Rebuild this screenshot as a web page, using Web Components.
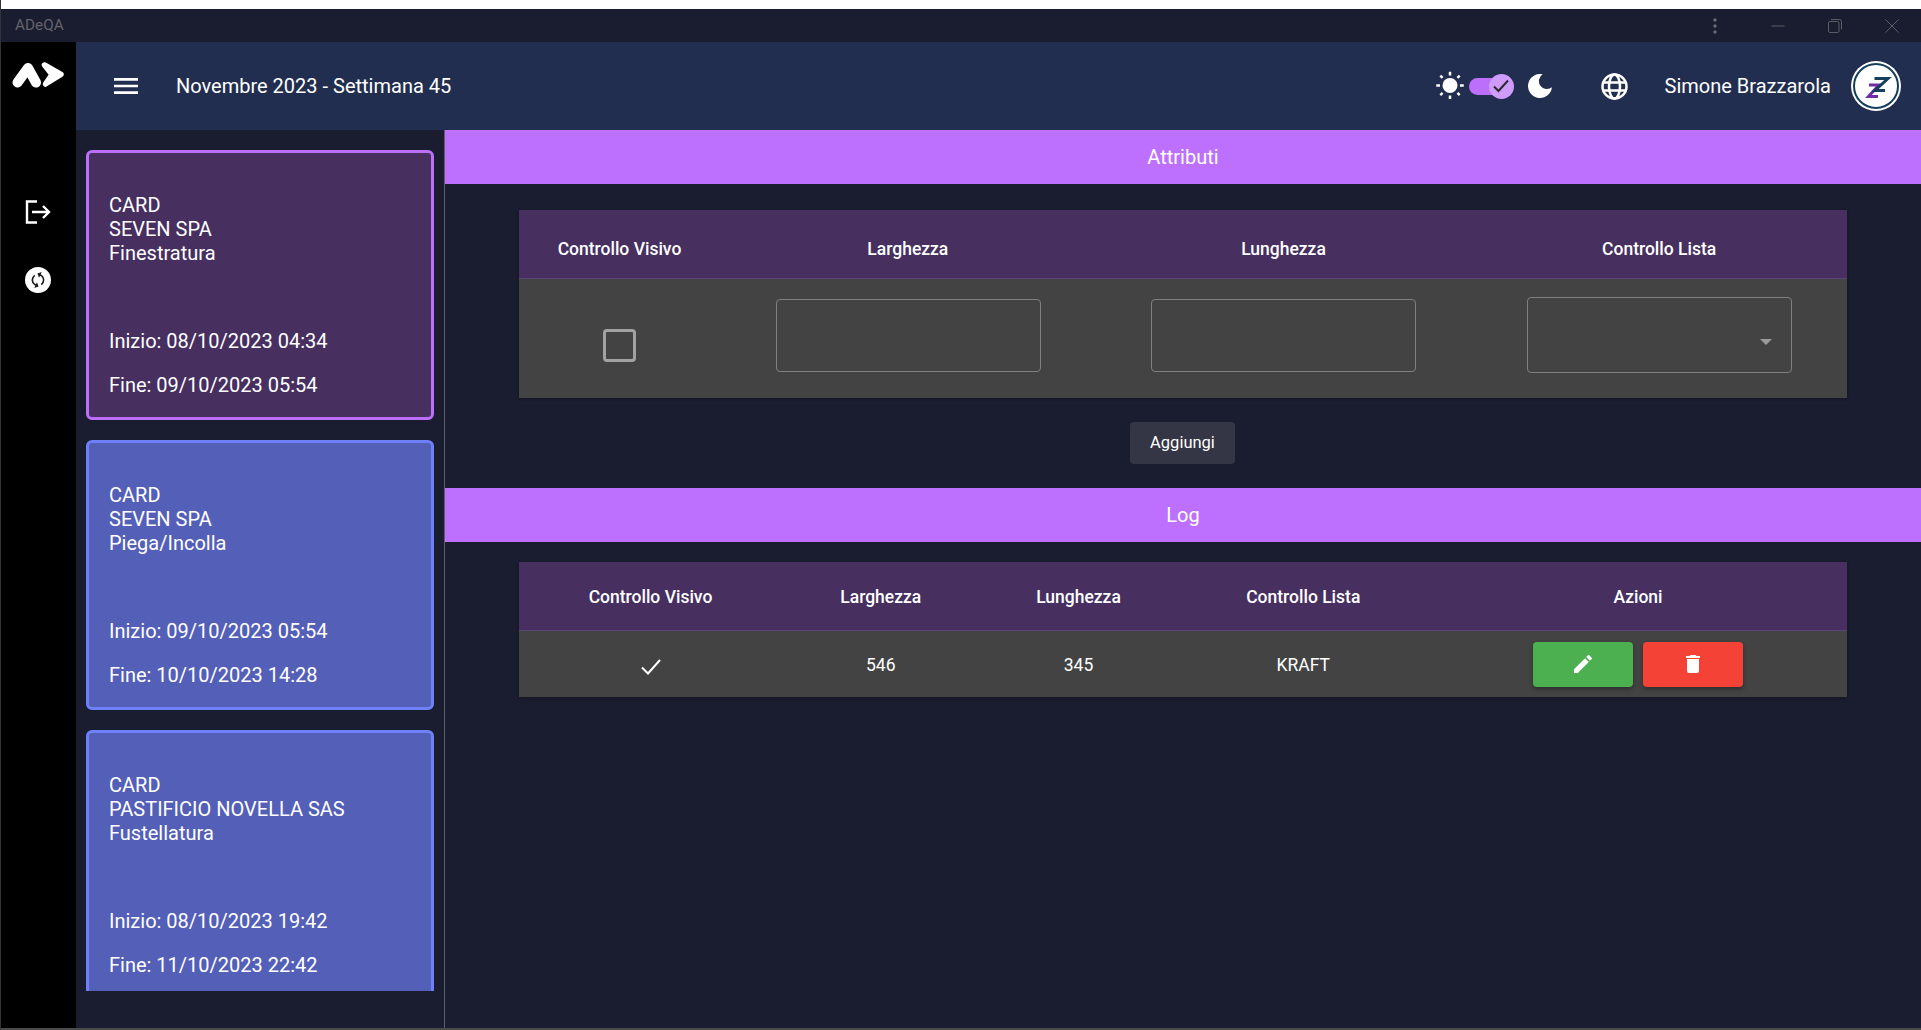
<!DOCTYPE html>
<html lang="it"><head><meta charset="utf-8"><title>ADeQA</title>
<style>
html,body{margin:0;padding:0;background:#fff;height:100%;overflow:hidden}
body{font-family:Roboto,"Liberation Sans",sans-serif;color:#fff}
</style></head><body>
<app-shell>
  <title-bar slot="title"></title-bar>
  <app-rail slot="rail"></app-rail>
  <app-toolbar slot="toolbar"></app-toolbar>
  <job-list slot="side">
    <job-card active client="SEVEN SPA" step="Finestratura" start="08/10/2023 04:34" end="09/10/2023 05:54"></job-card>
    <job-card client="SEVEN SPA" step="Piega/Incolla" start="09/10/2023 05:54" end="10/10/2023 14:28"></job-card>
    <job-card client="PASTIFICIO NOVELLA SAS" step="Fustellatura" start="08/10/2023 19:42" end="11/10/2023 22:42"></job-card>
  </job-list>
  <section-bar>Attributi</section-bar>
  <data-table style="--cols:201px 1fr 1fr 1fr;margin-top:26px">
    <data-row head style="padding-top:9px"><span>Controllo Visivo</span><span>Larghezza</span><span>Lunghezza</span><span>Controllo Lista</span></data-row>
    <data-row tall>
      <check-box style="margin-top:50px"></check-box>
      <text-field style="margin:20px 0 0 1.500px"></text-field>
      <text-field style="margin-top:20px"></text-field>
      <select-field style="margin-top:18px"></select-field>
    </data-row>
  </data-table>
  <add-button>Aggiungi</add-button>
  <section-bar>Log</section-bar>
  <data-table style="--cols:263px 197.500px 198px 251.500px 1fr;margin-top:20px">
    <data-row head style="padding-top:1px"><span>Controllo Visivo</span><span>Larghezza</span><span>Lunghezza</span><span>Controllo Lista</span><span>Azioni</span></data-row>
    <data-row style="padding-top:2px">
      <svg width="20" height="16" viewBox="0 0 20 16" fill="none" stroke="#fff" stroke-width="2" style="margin-top:3px"><polyline points="1,8.500 7,14.500 19,1"/></svg>
      <span>546</span><span>345</span><span>KRAFT</span>
      <row-actions style="margin-top:-2px"></row-actions>
    </data-row>
  </data-table>
</app-shell>
<script>
function def(name, html, cls){
  const t=document.createElement('template');t.innerHTML=html;
  customElements.define(name, class extends HTMLElement{
    constructor(){super();this.attachShadow({mode:'open'}).appendChild(t.content.cloneNode(true));}
    connectedCallback(){ if(cls) cls(this); }
  });
}
def('app-shell',`<style>
:host{display:grid;box-sizing:border-box;width:1921px;height:1030px;padding-top:9px;background:linear-gradient(#fff 9px,#1a1c2f 9px);
grid-template-columns:75px 368px 1fr;grid-template-rows:33px 88px 1fr;border-left:1px solid #30323c;border-bottom:2px solid #4a4a4a}
.s{display:block;min-height:0;overflow:hidden}
main{border-left:1px solid #5d5e6c;display:flex;flex-direction:column;min-width:0}
</style>
<slot name="title" style="display:block;grid-column:1/-1"></slot>
<slot name="rail" style="display:block;grid-row:2/4"></slot>
<slot name="toolbar" style="display:block;grid-column:2/4"></slot>
<slot name="side" class="s"></slot>
<main><slot></slot></main>`);

def('title-bar',`<style>
:host{display:flex;align-items:center;height:33px;background:#1a1c2f;color:#64646e;font:15.300px/33px Roboto,sans-serif;padding-left:14px}
.w{margin-left:auto;display:flex;align-items:center}
svg{display:block}
</style><span>ADeQA</span><div class="w">
<svg width="4" height="16" viewBox="0 0 4 16" fill="#6a6a74" style="margin-right:54px"><circle cx="2" cy="2" r="1.700"/><circle cx="2" cy="8" r="1.700"/><circle cx="2" cy="14" r="1.700"/></svg>
<svg width="14" height="14" viewBox="0 0 14 14" fill="none" stroke="#5c5c66" style="margin-right:43px"><path d="M0.500 7h13"/></svg>
<svg width="14" height="14" viewBox="0 0 14 14" fill="none" stroke="#5c5c66" style="margin-right:43px"><rect x=".5" y="2.500" width="10.500" height="11" rx="1.500"/><path d="M3 .5h8.500a2 2 0 0 1 2 2v8"/></svg>
<svg width="14" height="14" viewBox="0 0 14 14" fill="none" stroke="#5c5c66" style="margin-right:22px"><path d="M.5.5l13 13M13.500.5l-13 13"/></svg>
</div>`);

def('app-rail',`<style>
:host{display:flex;flex-direction:column;align-items:center;height:100%;background:#000}
svg{display:block}
</style>
<svg width="54" height="28" viewBox="0 0 54 28" style="margin:19px 1px 0 0">
<path d="M6.500 21.500 L17 7 L25 21.500" fill="none" stroke="#fff" stroke-width="10" stroke-linecap="round" stroke-linejoin="round"/>
<path d="M33.500 4 L50 13.500 L34.500 23 L41 13.500Z" fill="#fff" stroke="#fff" stroke-width="5.500" stroke-linejoin="round"/>
</svg>
<svg width="26" height="24" viewBox="0 0 26 24" fill="none" stroke="#fff" stroke-width="2.400" style="margin:111px 1px 0 0">
<path d="M12 1.500H2V22.500H12"/><path d="M7 12H24M18 6l6 6-6 6"/></svg>
<svg width="26" height="26" viewBox="0 0 26 26" style="margin:43px 1px 0 0"><circle cx="13" cy="13" r="13" fill="#fff"/>
<g transform="translate(3.400 3.400) scale(.8) rotate(25 12 12)"><path fill="#1a1a1a" d="M12,18A6,6 0 0,1 6,12C6,11 6.250,10.030 6.700,9.200L5.240,7.740C4.460,8.970 4,10.430 4,12A8,8 0 0,0 12,20V23L16,19L12,15M12,4V1L8,5L12,9V6A6,6 0 0,1 18,12C18,13 17.750,13.970 17.300,14.800L18.760,16.260C19.540,15.030 20,13.570 20,12A8,8 0 0,0 12,4Z"/></g></svg>`);

def('app-toolbar',`<style>
:host{display:flex;align-items:center;height:88px;background:#222e4f;font:20px/24px Roboto,sans-serif;color:#fff;padding-right:20px}
svg{display:block;flex:none}
.title{margin-left:34px}
.right{margin-left:auto;display:flex;align-items:center}
.track{position:relative;width:45px;height:25px;margin:0 14px 0 4px}
.track i{position:absolute;left:0;top:4px;width:36px;height:17px;border-radius:9px;background:#bb6ffb}
.track b{position:absolute;right:0;top:0;width:25px;height:25px;border-radius:50%;background:#cf9bfd;display:flex;align-items:center;justify-content:center}
.name{margin:0 20px 0 37px}
.av{width:50px;height:50px}
</style>
<svg width="32" height="32" viewBox="0 0 24 24" fill="#fff" style="margin-left:34px"><path d="M3,6H21V8H3V6M3,11H21V13H3V11M3,16H21V18H3V16Z"/></svg>
<span class="title">Novembre 2023 - Settimana 45</span>
<div class="right">
<svg width="30" height="30" viewBox="0 0 24 24" fill="#fff"><path d="M3.550,18.540L4.960,19.950L6.760,18.160L5.340,16.740M11,22.450C11.320,22.450 13,22.450 13,22.450V19.500H11M12,5.500A6,6 0 0,0 6,11.500A6,6 0 0,0 12,17.500A6,6 0 0,0 18,11.500C18,8.180 15.310,5.500 12,5.500M20,12.500H23V10.500H20M17.240,18.160L19.040,19.950L20.450,18.540L18.660,16.740M20.450,4.460L19.040,3.050L17.240,4.840L18.660,6.260M13,.55H11V3.500H13M4,10.500H1V12.500H4M6.760,4.840L4.960,3.050L3.550,4.460L5.340,6.260L6.760,4.840Z"/></svg>
<div class="track"><i></i><b><svg width="16" height="14" viewBox="0 0 16 14" fill="none" stroke="#2a2a2a" stroke-width="2"><polyline points="1,7.500 5.500,12 15,1.500"/></svg></b></div>
<svg width="24" height="24" viewBox="0 0 24 24" fill="#fff"><path d="M14.650 .3A12 12 0 1 0 23.930 13.300A8 8 0 1 1 14.650 .3Z"/></svg>
<svg width="27" height="27" viewBox="0 0 27 27" fill="none" stroke="#fff" stroke-width="2.500" style="margin-left:49px"><circle cx="13.500" cy="13.500" r="12"/><ellipse cx="13.500" cy="13.500" rx="5.500" ry="12"/><path d="M2.500 9.500H24.500M2.500 17.500H24.500"/></svg>
<span class="name">Simone Brazzarola</span>
<svg class="av" viewBox="0 0 50 50" fill="none"><circle cx="25" cy="25" r="25" fill="#fff"/><circle cx="25" cy="25" r="22" fill="#fff" stroke="#153f5c" stroke-width="2"/>
<polyline points="18,24 28,24 17.500,35.500 27,35.500" stroke="#6f2da8" stroke-width="3"/>
<polyline points="23.500,17.500 37,17.500 24,29.500 34,29.500" stroke="#153f5c" stroke-width="3"/></svg>
</div>`);

def('job-list',`<style>:host{display:flex;flex-direction:column;box-sizing:border-box;height:861px;padding:20px 10px 0;overflow:hidden}
.c{display:flex;flex-direction:column;gap:20px;height:841px;overflow:hidden}</style><div class="c"><slot></slot></div>`);

def('job-card',`<style>
:host{display:flex;flex:none;flex-direction:column;box-sizing:border-box;height:270px;padding:40px 18px 20px 20px;border:3px solid #6f80fb;border-radius:6px;background:#545fb8;font:20px/24px Roboto,sans-serif;color:#fff}
:host([active]){border-color:#bb6ffb;background:#472f60}
.b{height:72px;margin-bottom:64px}
.f{margin-bottom:20px}
</style><div class="b">CARD<br><span id="c"></span><br><span id="s"></span></div>
<div class="f" id="i"></div><div id="e"></div>`, el=>{
  const r=el.shadowRoot;
  r.getElementById('c').textContent=el.getAttribute('client');
  r.getElementById('s').textContent=el.getAttribute('step');
  r.getElementById('i').textContent='Inizio: '+el.getAttribute('start');
  r.getElementById('e').textContent='Fine: '+el.getAttribute('end');
});

def('section-bar',`<style>:host{display:flex;flex:none;align-items:center;justify-content:center;height:54px;background:#bc70fd;font:20px/24px Roboto,sans-serif;color:#fff}</style><slot></slot>`);

def('data-table',`<style>:host{display:block;flex:none;margin:0 74px 0 74px;box-shadow:0 1px 3px rgba(0,0,0,.25)}</style><slot></slot>`);

def('data-row',`<style>
:host{display:grid;box-sizing:border-box;grid-template-columns:var(--cols);justify-items:center;align-items:center;height:66px;background:#434343;font:400 17.500px/24px Roboto,sans-serif;color:#fff}
:host([head]){height:69px;background:#472f60;font-weight:500;box-shadow:inset 0 -1px 0 #5b4576}
:host([tall]){height:119px;align-items:start}
</style><slot></slot>`);

def('check-box',`<style>:host{display:block;box-sizing:border-box;width:33px;height:33px;border:3px solid #a2a2a2;border-radius:4px}</style>`);
def('text-field',`<style>:host{display:block}input{display:block;box-sizing:border-box;width:265px;height:73px;background:transparent;border:1px solid #7f7f7f;border-radius:4px;outline:0;color:#fff}</style><input type="text" aria-label="valore">`);
def('select-field',`<style>:host{display:block;position:relative;box-sizing:border-box;width:265px;height:76px;border:1px solid #7f7f7f;border-radius:4px}
i{position:absolute;right:19px;top:41px;border:6px solid transparent;border-top:6px solid #9a9a9a;border-bottom:0}</style><i></i>`);
def('add-button',`<style>:host{display:block;align-self:center;box-sizing:border-box;width:105px;height:42px;margin:24px 1px 24px 0;border-radius:4px;background:#343645;color:#fff;text-align:center;font:16.500px/42px Roboto,sans-serif}</style><slot></slot>`);
def('row-actions',`<style>
:host{display:flex;gap:10px}
span{display:flex;align-items:center;justify-content:center;width:100px;height:45px;border-radius:4px;box-shadow:0 2px 4px rgba(0,0,0,.35)}
.g{background:#4caf50}.r{background:#f44336}
</style>
<span class="g"><svg width="24" height="24" viewBox="0 0 24 24" fill="#fff"><path d="M20.710,7.040C21.100,6.650 21.100,6 20.710,5.630L18.370,3.290C18,2.900 17.350,2.900 16.960,3.290L15.120,5.120L18.870,8.870M3,17.250V21H6.750L17.810,9.930L14.060,6.180L3,17.250Z"/></svg></span>
<span class="r"><svg width="24" height="24" viewBox="0 0 24 24" fill="#fff" style="margin-right:1px"><path d="M19,4H15.500L14.500,3H9.500L8.500,4H5V6H19M6,19A2,2 0 0,0 8,21H16A2,2 0 0,0 18,19V7H6V19Z"/></svg></span>`);
</script>
</body></html>
